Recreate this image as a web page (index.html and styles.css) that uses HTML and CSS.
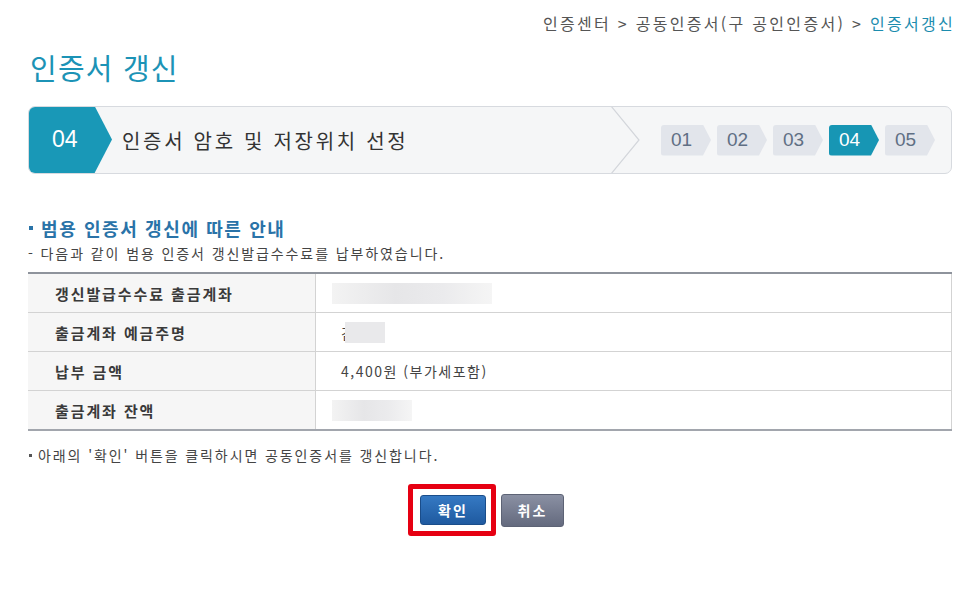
FILE: index.html
```html
<!DOCTYPE html>
<html lang="ko">
<head>
    <meta charset="UTF-8">
    <title>인증서 갱신</title>
    <link rel="stylesheet" href="styles.css">
</head>
<body>
    <div class="page">
        <div class="breadcrumb">인증센터 &gt; 공동인증서(구 공인인증서) &gt; <span class="current">인증서갱신</span></div>

        <h1 class="page-title">인증서 갱신</h1>

        <div class="step-bar">
            <div class="step-now">04</div>
            <div class="step-name">인증서 암호 및 저장위치 선정</div>
            <svg class="step-sep" width="34" height="68" viewBox="0 0 34 68">
                <polyline points="3,0 31,34 3,68" fill="none" stroke="#d3d6db" stroke-width="1.2"/>
            </svg>
            <ul class="step-list">
                <li>01</li>
                <li>02</li>
                <li>03</li>
                <li class="on">04</li>
                <li>05</li>
            </ul>
        </div>

        <h2 class="sec-title"><span class="dot"></span>범용 인증서 갱신에 따른 안내</h2>
        <p class="sec-desc">- 다음과 같이 범용 인증서 갱신발급수수료를 납부하였습니다.</p>

        <table class="info-table">
            <tr>
                <th>갱신발급수수료 출금계좌</th>
                <td><span class="blur" style="width:160px"></span></td>
            </tr>
            <tr>
                <th>출금계좌 예금주명</th>
                <td class="pad"><span class="name">김</span><span class="blur over" style="width:40px"></span></td>
            </tr>
            <tr>
                <th>납부 금액</th>
                <td class="pad">4,400원 (부가세포함)</td>
            </tr>
            <tr>
                <th>출금계좌 잔액</th>
                <td><span class="blur" style="width:80px"></span></td>
            </tr>
        </table>

        <p class="note"><span class="dot small"></span>아래의 '확인' 버튼을 클릭하시면 공동인증서를 갱신합니다.</p>

        <div class="btn-row">
            <div class="mark">
                <button class="btn btn-ok">확인</button>
            </div>
            <button class="btn btn-cancel">취소</button>
        </div>
    </div>
</body>
</html>
```

FILE: styles.css
```css
body {
    margin: 0;
    background: #fff;
    font-family: "Noto Sans CJK KR", "Noto Sans", sans-serif;
    color: #333;
}
.page {
    width: 924px;
    padding: 0 23px 0 28px;
}
.breadcrumb {
    text-align: right;
    font-size: 16px;
    line-height: 20px;
    padding-top: 13px;
    margin-right: -3px;
    letter-spacing: 2.3px;
    color: #555;
}
.breadcrumb .current {
    color: #1b8cae;
}
.page-title {
    margin: 14px 0 0 2px;
    font-size: 29px;
    font-weight: 400;
    line-height: 40px;
    letter-spacing: 1.2px;
    color: #1c93b6;
}
.step-bar {
    margin-top: 19px;
    height: 66px;
    display: flex;
    align-items: center;
    border: 1px solid #d7dadf;
    border-radius: 7px;
    background: #f5f6f7;
    overflow: hidden;
}
.step-now {
    width: 84px;
    height: 68px;
    margin: -1px 0 0 -1px;
    padding-left: 24px;
    box-sizing: border-box;
    display: flex;
    align-items: center;
    background: #1998b7;
    color: #fff;
    font-family: "Liberation Sans", Arial, sans-serif;
    font-size: 23px;
    clip-path: polygon(0 0, 79% 0, 100% 50%, 79% 100%, 0 100%);
    border-radius: 7px 0 0 7px;
}
.step-name {
    flex: 1;
    padding-left: 10px;
    font-size: 20px;
    letter-spacing: 2.7px;
    color: #333;
}
.step-sep {
    flex: none;
}
.step-list {
    list-style: none;
    margin: 0;
    padding: 0 16px 0 19px;
    display: flex;
    gap: 6px;
    align-items: center;
}
.step-list li {
    width: 50px;
    height: 31px;
    box-sizing: border-box;
    padding-left: 10px;
    display: flex;
    align-items: center;
    background: #e2e5eb;
    color: #5f6f84;
    font-family: "Liberation Sans", Arial, sans-serif;
    font-size: 19px;
    clip-path: polygon(0 0, 84% 0, 100% 50%, 84% 100%, 0 100%);
    border-radius: 3px 0 0 3px;
}
.step-list li.on {
    background: #1796b4;
    color: #fff;
}
.sec-title {
    margin: 42px 0 0 0;
    font-size: 18px;
    font-weight: 700;
    line-height: 24px;
    letter-spacing: 1.6px;
    color: #2a73a8;
    display: flex;
    align-items: center;
}
.dot {
    display: inline-block;
    width: 4px;
    height: 4px;
    background: #2a73a8;
    margin: 0 8px 0 1px;
}
.dot.small {
    width: 3px;
    height: 3px;
    background: #555;
    margin: 0 6px 0 1px;
}
.sec-desc {
    margin: 4px 0 0 0;
    font-size: 14px;
    line-height: 18px;
    letter-spacing: 1.9px;
    color: #444;
}
.info-table {
    width: 100%;
    margin-top: 10px;
    border-collapse: collapse;
    border-top: 2px solid #8e939c;
    border-bottom: 2px solid #a2a6ad;
    border-right: 1px solid #d3d3d3;
    font-size: 14px;
}
.info-table th {
    width: 260px;
    height: 38px;
    padding: 0 0 0 27px;
    text-align: left;
    font-size: 15px;
    font-weight: 700;
    color: #3a3a3a;
    background: #f6f6f6;
    border-right: 1px solid #d3d3d3;
    border-top: 1px solid #d3d3d3;
    letter-spacing: 1.9px;
}
.info-table td {
    padding: 0 0 0 16px;
    color: #444;
    letter-spacing: 1.5px;
    border-top: 1px solid #d3d3d3;
}
.info-table td.pad {
    padding-left: 25px;
}
.blur {
    display: inline-block;
    height: 21px;
    vertical-align: middle;
    background: linear-gradient(90deg, #f3f3f3, #e6e6e8 40%, #ebebed 70%, #f5f5f5);
}
.name {
    vertical-align: middle;
}
.blur.over {
    margin-left: -10px;
    position: relative;
    background: #e9e9eb;
}
.note {
    margin: 15px 0 0 0;
    font-size: 14px;
    line-height: 18px;
    letter-spacing: 1.9px;
    color: #444;
    display: flex;
    align-items: center;
}
.btn-row {
    margin-top: 20px;
    display: flex;
    justify-content: center;
    align-items: center;
    gap: 5px;
    padding-right: 8px;
}
.mark {
    border: 5px solid #e60012;
    border-radius: 3px;
    padding: 6px 5px 6px 7px;
    display: flex;
}
.btn {
    font-family: "Noto Sans CJK KR", sans-serif;
    font-weight: 700;
    font-size: 14px;
    color: #fff;
    border-radius: 3px;
    cursor: pointer;
    letter-spacing: 2px;
}
.btn-ok {
    width: 66px;
    height: 30px;
    border: 1px solid #1a4d8a;
    background: linear-gradient(#3579c3, #1f5aa0);
}
.btn-cancel {
    width: 63px;
    height: 33px;
    border: 1px solid #5d6375;
    background: linear-gradient(#8a90a3, #646a7e);
}
```
